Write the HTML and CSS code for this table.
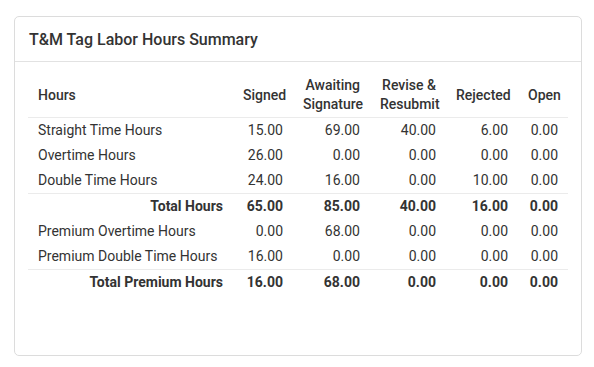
FILE: index.html
```html
<!DOCTYPE html>
<html lang="en">
<head>
<meta charset="utf-8">
<title>T&amp;M Tag Labor Hours Summary</title>
<link rel="stylesheet" href="styles.css">
</head>
<body>
<div class="card">
  <div class="card-header">T&amp;M Tag Labor Hours Summary</div>
  <div class="card-body">
    <table class="hours-table">
      <colgroup>
        <col class="c-name">
        <col class="c-signed">
        <col class="c-await">
        <col class="c-revise">
        <col class="c-rejected">
        <col class="c-open">
      </colgroup>
      <thead>
        <tr>
          <th class="left">Hours</th>
          <th>Signed</th>
          <th>Awaiting<br>Signature</th>
          <th>Revise &amp;<br>Resubmit</th>
          <th>Rejected</th>
          <th>Open</th>
        </tr>
      </thead>
      <tbody>
        <tr><td class="left">Straight Time Hours</td><td>15.00</td><td>69.00</td><td>40.00</td><td>6.00</td><td>0.00</td></tr>
        <tr><td class="left">Overtime Hours</td><td>26.00</td><td>0.00</td><td>0.00</td><td>0.00</td><td>0.00</td></tr>
        <tr><td class="left">Double Time Hours</td><td>24.00</td><td>16.00</td><td>0.00</td><td>10.00</td><td>0.00</td></tr>
        <tr class="total"><td>Total Hours</td><td>65.00</td><td>85.00</td><td>40.00</td><td>16.00</td><td>0.00</td></tr>
        <tr><td class="left">Premium Overtime Hours</td><td>0.00</td><td>68.00</td><td>0.00</td><td>0.00</td><td>0.00</td></tr>
        <tr><td class="left">Premium Double Time Hours</td><td>16.00</td><td>0.00</td><td>0.00</td><td>0.00</td><td>0.00</td></tr>
        <tr class="total"><td>Total Premium Hours</td><td>16.00</td><td>68.00</td><td>0.00</td><td>0.00</td><td>0.00</td></tr>
      </tbody>
    </table>
  </div>
</div>
</body>
</html>
```

FILE: styles.css
```css
html, body {
  margin: 0;
  padding: 0;
  background: #ffffff;
}
body {
  padding: 16px 12px 0 14px;
  font-family: Roboto, "Liberation Sans", Arial, sans-serif;
  color: #333333;
}
.card {
  box-sizing: border-box;
  width: 568px;
  height: 340px;
  border: 1px solid #dcdcdc;
  border-radius: 5px;
  background: #ffffff;
}
.card-header {
  padding: 11px 14px 10px;
  font-size: 16px;
  line-height: 23px;
  font-weight: 500;
  color: #333333;
  border-bottom: 1px solid #e2e2e2;
}
.card-body {
  padding: 11px 13px 0;
}
.hours-table {
  width: 540px;
  border-collapse: collapse;
  table-layout: fixed;
  font-size: 14px;
  line-height: 19px;
  color: #333333;
}
.c-signed { width: 60px; }
.c-await { width: 77px; }
.c-revise { width: 76px; }
.c-rejected { width: 72px; }
.c-open { width: 50px; }
.hours-table th,
.hours-table td {
  padding: 3px 10px;
  text-align: right;
  white-space: nowrap;
}
.hours-table th {
  font-weight: 500;
  vertical-align: middle;
  border-bottom: 1px solid #ebebeb;
}
.hours-table .left {
  text-align: left;
}
.hours-table .total td {
  font-weight: 700;
  border-top: 1px solid #ebebeb;
}
.hours-table tbody tr:first-child td {
  padding-top: 3px;
}
```
